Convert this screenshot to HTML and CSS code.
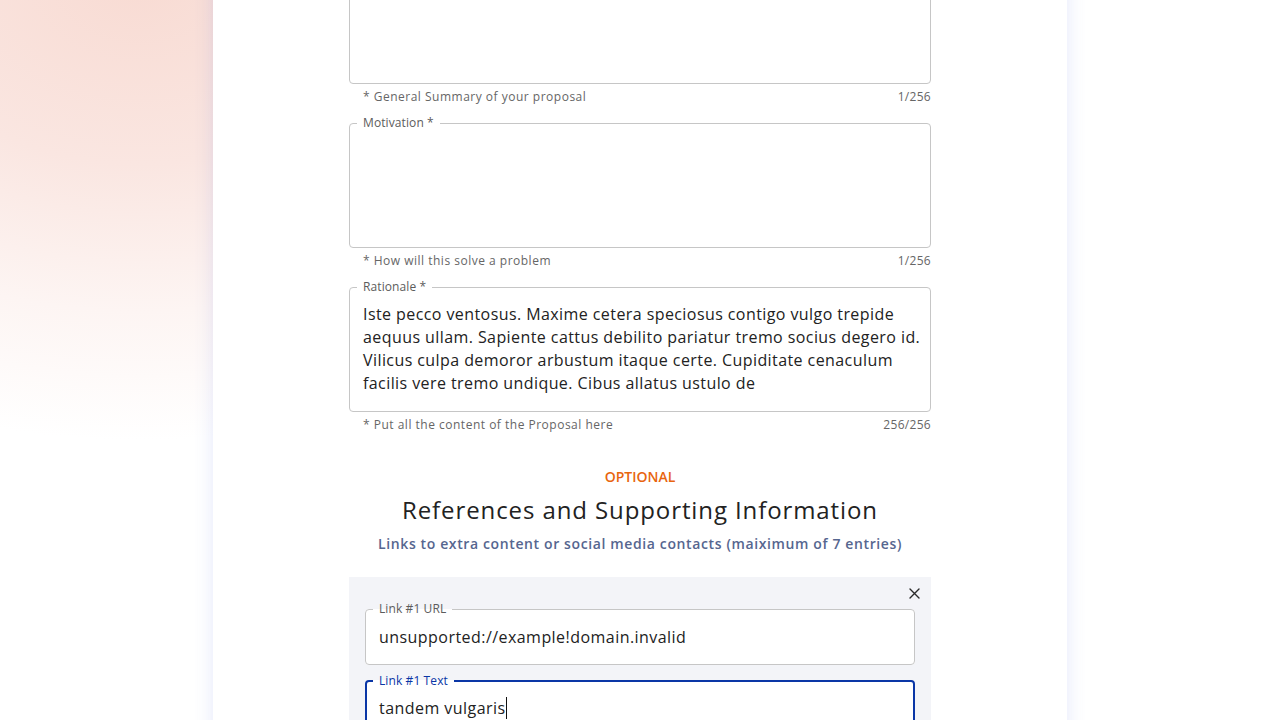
FILE: index.html
```html
<!DOCTYPE html>
<html lang="en">
<head>
<meta charset="utf-8">
<title>Proposal</title>
<link rel="stylesheet" href="styles.css">
</head>
<body>
<main class="card">
  <div class="form">
    <div class="field">
      <fieldset class="box">
        <legend>Summary *</legend>
        <div class="ta"></div>
      </fieldset>
      <div class="helper"><span>* General Summary of your proposal</span><span>1/256</span></div>
    </div>
    <div class="field">
      <fieldset class="box">
        <legend>Motivation *</legend>
        <div class="ta"></div>
      </fieldset>
      <div class="helper"><span>* How will this solve a problem</span><span>1/256</span></div>
    </div>
    <div class="field">
      <fieldset class="box">
        <legend>Rationale *</legend>
        <div class="ta">Iste pecco ventosus. Maxime cetera speciosus contigo vulgo trepide<br>aequus ullam. Sapiente cattus debilito pariatur tremo socius degero id.<br>Vilicus culpa demoror arbustum itaque certe. Cupiditate cenaculum<br>facilis vere tremo undique. Cibus allatus ustulo de</div>
      </fieldset>
      <div class="helper"><span>* Put all the content of the Proposal here</span><span>256/256</span></div>
    </div>

    <section class="intro">
      <div class="eyebrow">OPTIONAL</div>
      <h2 class="title">References and Supporting Information</h2>
      <p class="subtitle">Links to extra content or social media contacts (maiximum of 7 entries)</p>
    </section>

    <section class="links">
      <div class="links-head">
        <button class="close" type="button" aria-label="Remove link">
          <svg width="11" height="11" viewBox="0 0 11 11"><path d="M1 1L10 10M10 1L1 10" stroke="#2b2b2b" stroke-width="1.4" stroke-linecap="round" fill="none"/></svg>
        </button>
      </div>
      <fieldset class="box inbox">
        <legend>Link #1 URL</legend>
        <div class="inp">unsupported://example!domain.invalid</div>
      </fieldset>
      <fieldset class="box inbox focused">
        <legend>Link #1 Text</legend>
        <div class="inp">tandem vulgaris<span class="caret"></span></div>
      </fieldset>
    </section>
  </div>
</main>
</body>
</html>
```

FILE: styles.css
```css
html, body {
  margin: 0;
  height: 100%;
}
body {
  font-family: "Open Sans", "Liberation Sans", sans-serif;
  color: #222;
  overflow: hidden;
  background: radial-gradient(ellipse 640px 460px at 140px -20px, #f8dbd3 0%, #fae6e1 40%, #fdf5f3 72%, #ffffff 100%);
}
.card {
  width: 854px;
  box-sizing: border-box;
  margin: 0 auto;
  min-height: 100%;
  padding: 0 136px;
  background: #fff;
  box-shadow: 0 0 18px rgba(90, 110, 230, 0.16);
}
.form {
  margin-top: -49px;
}
.field {
  margin-bottom: 9px;
}
.box {
  margin: 0;
  min-width: 0;
  padding: 8px 13px 0;
  border: 1px solid #c6c6c6;
  border-radius: 4px;
  background: #fff;
}
.box legend {
  font-size: 12px;
  line-height: 16px;
  padding: 0 6px;
  margin-left: -6px;
  color: #5c5c5c;
  letter-spacing: 0.1px;
}
.ta {
  height: 108px;
  font-size: 16px;
  line-height: 23px;
  letter-spacing: 0.42px;
  color: #222;
  white-space: nowrap;
}
.helper {
  display: flex;
  justify-content: space-between;
  margin-top: 4px;
  padding-left: 14px;
  font-size: 12px;
  line-height: 18px;
  letter-spacing: 0.5px;
  color: #666;
}
.helper span:last-child {
  letter-spacing: 0.3px;
}
.intro {
  text-align: center;
  margin-top: 33px;
}
.eyebrow {
  font-size: 14px;
  line-height: 20px;
  font-weight: 600;
  color: #e8650f;
}
.title {
  margin: 7px 0 0;
  font-size: 24px;
  line-height: 32px;
  font-weight: 400;
  letter-spacing: 0.9px;
  color: #222;
}
.subtitle {
  margin: 8px 0 0;
  font-size: 14px;
  line-height: 20px;
  font-weight: 600;
  letter-spacing: 0.62px;
  color: #56668f;
}
.links {
  margin-top: 23px;
  padding: 8px 16px 16px;
  background: #f3f4f8;
}
.links-head {
  display: flex;
  justify-content: flex-end;
  height: 16px;
  margin-right: -7px;
}
.close {
  width: 16px;
  height: 16px;
  padding: 0;
  border: 0;
  background: none;
  display: flex;
  align-items: center;
  justify-content: center;
}
.inbox {
  padding: 0 13px;
}
.inbox + .inbox {
  margin-top: 8px;
}
.inp {
  height: 47px;
  box-sizing: border-box;
  padding-top: 8px;
  font-size: 16px;
  line-height: 24px;
  letter-spacing: 0.45px;
  color: #222;
  white-space: nowrap;
}
.focused {
  border: 2px solid #0a36a6;
  padding: 0 12px;
}
.focused legend {
  color: #0a36a6;
}
.focused .inp {
  height: 46px;
  padding-top: 7px;
}
.caret {
  display: inline-block;
  width: 1px;
  height: 22px;
  background: #111;
  vertical-align: -5px;
}
```
